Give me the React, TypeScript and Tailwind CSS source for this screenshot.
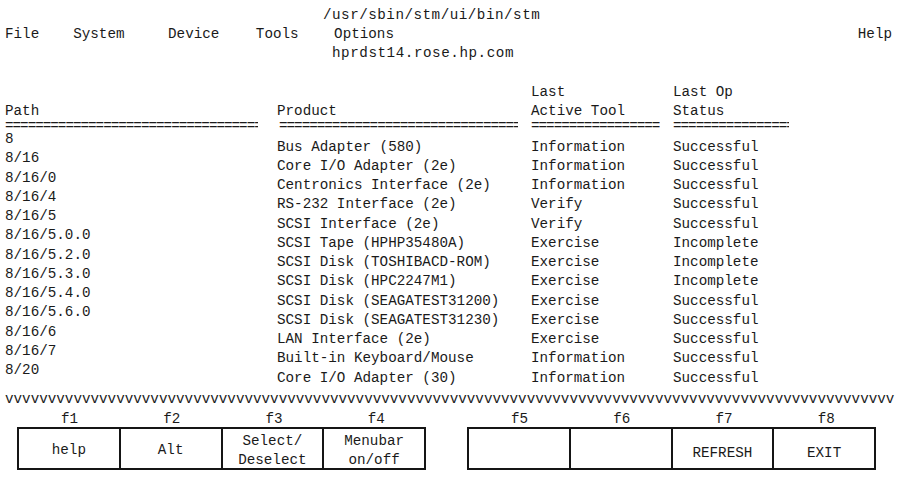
import React from "react";

const paths = [
  "8",
  "8/16",
  "8/16/0",
  "8/16/4",
  "8/16/5",
  "8/16/5.0.0",
  "8/16/5.2.0",
  "8/16/5.3.0",
  "8/16/5.4.0",
  "8/16/5.6.0",
  "8/16/6",
  "8/16/7",
  "8/20",
];

const rows: [string, string, string][] = [
  ["Bus Adapter (580)", "Information", "Successful"],
  ["Core I/O Adapter (2e)", "Information", "Successful"],
  ["Centronics Interface (2e)", "Information", "Successful"],
  ["RS-232 Interface (2e)", "Verify", "Successful"],
  ["SCSI Interface (2e)", "Verify", "Successful"],
  ["SCSI Tape (HPHP35480A)", "Exercise", "Incomplete"],
  ["SCSI Disk (TOSHIBACD-ROM)", "Exercise", "Incomplete"],
  ["SCSI Disk (HPC2247M1)", "Exercise", "Incomplete"],
  ["SCSI Disk (SEAGATEST31200)", "Exercise", "Successful"],
  ["SCSI Disk (SEAGATEST31230)", "Exercise", "Successful"],
  ["LAN Interface (2e)", "Exercise", "Successful"],
  ["Built-in Keyboard/Mouse", "Information", "Successful"],
  ["Core I/O Adapter (30)", "Information", "Successful"],
];

const leftKeys: { f: string; lines: string[] }[] = [
  { f: "f1", lines: ["help"] },
  { f: "f2", lines: ["Alt"] },
  { f: "f3", lines: ["Select/", "Deselect"] },
  { f: "f4", lines: ["Menubar", "on/off"] },
];
const rightKeys: { f: string; lines: string[] }[] = [
  { f: "f5", lines: [] },
  { f: "f6", lines: [] },
  { f: "f7", lines: ["REFRESH"] },
  { f: "f8", lines: ["EXIT"] },
];

function KeyGroup({ keys, lower }: { keys: { f: string; lines: string[] }[]; lower?: boolean }) {
  return (
    <div className="flex flex-col w-[409px]">
      <div className="flex h-[15px] leading-[15px]">
        {keys.map((k) => (
          <div key={k.f} className="flex-1 text-center pl-[3px]">
            {k.f}
          </div>
        ))}
      </div>
      <div className="flex h-[43px] border-2 border-[#151515]">
        {keys.map((k, i) => (
          <div
            key={k.f}
            className={
              "flex-1 flex flex-col items-center justify-center leading-[19px] " +
              (i > 0 ? "border-l-2 border-[#151515] " : "") +
              (lower ? "pt-[9px]" : "pt-[4px]")
            }
          >
            {k.lines.map((l) => (
              <div key={l}>{l}</div>
            ))}
          </div>
        ))}
      </div>
    </div>
  );
}

export default function App() {
  return (
    <div
      className="w-[901px] h-[477px] bg-white text-[#1a1a1a] text-[14.25px] leading-[19.25px] overflow-hidden pt-[5.5px] whitespace-pre"
      style={{ fontFamily: '"Liberation Mono", "Courier New", monospace' }}
    >
      <div className="h-[19.25px] pl-[323px] tracking-[0.5px]">/usr/sbin/stm/ui/bin/stm</div>
      <div className="h-[19.25px] flex pl-[5px] pr-[9px]">
        <span>File</span>
        <span className="ml-[34px]">System</span>
        <span className="ml-[43.5px]">Device</span>
        <span className="ml-[36.5px]">Tools</span>
        <span className="ml-[35.5px]">Options</span>
        <span className="ml-auto">Help</span>
      </div>
      <div className="h-[19.25px] pl-[332px] tracking-[0.55px]">hprdst14.rose.hp.com</div>
      <div className="h-[19.25px]" />
      <div className="h-[19.25px] grid grid-cols-[272px_254px_142px_1fr] pl-[5px]">
        <span />
        <span />
        <span>Last</span>
        <span>Last Op</span>
      </div>
      <div className="h-[19.25px] grid grid-cols-[272px_254px_142px_1fr] pl-[5px]">
        <span>Path</span>
        <span>Product</span>
        <span>Active Tool</span>
        <span>Status</span>
      </div>
      <div className="mt-[1px] h-[8px] leading-[8px] grid grid-cols-[272px_254px_142px_1fr] pl-[5px] tracking-[-1px]">
        <span className="w-[253px] h-[8px] overflow-hidden">{"=".repeat(34)}</span>
        <span className="w-[241px] h-[8px] overflow-hidden pl-[2px]">{"=".repeat(32)}</span>
        <span className="w-[129px] h-[8px] overflow-hidden">{"=".repeat(17)}</span>
        <span className="w-[116px] h-[8px] overflow-hidden">{"=".repeat(16)}</span>
      </div>
      <div className="flex pl-[5px]">
        <div className="w-[272px] flex flex-col">
          {paths.map((p) => (
            <div key={p} className="h-[19.25px]">
              {p}
            </div>
          ))}
        </div>
        <div className="flex flex-col pt-[7.5px]">
          {rows.map((r) => (
            <div key={r[0]} className="h-[19.25px] grid grid-cols-[254px_142px_1fr]">
              <span>{r[0]}</span>
              <span>{r[1]}</span>
              <span>{r[2]}</span>
            </div>
          ))}
        </div>
      </div>
      <div className="h-[19.25px] pl-[5px] pt-[2.5px]">{"v".repeat(104)}</div>
      <div className="flex mt-[5px] pl-[17px] gap-[41px]">
        <KeyGroup keys={leftKeys} />
        <KeyGroup keys={rightKeys} lower />
      </div>
    </div>
  );
}
